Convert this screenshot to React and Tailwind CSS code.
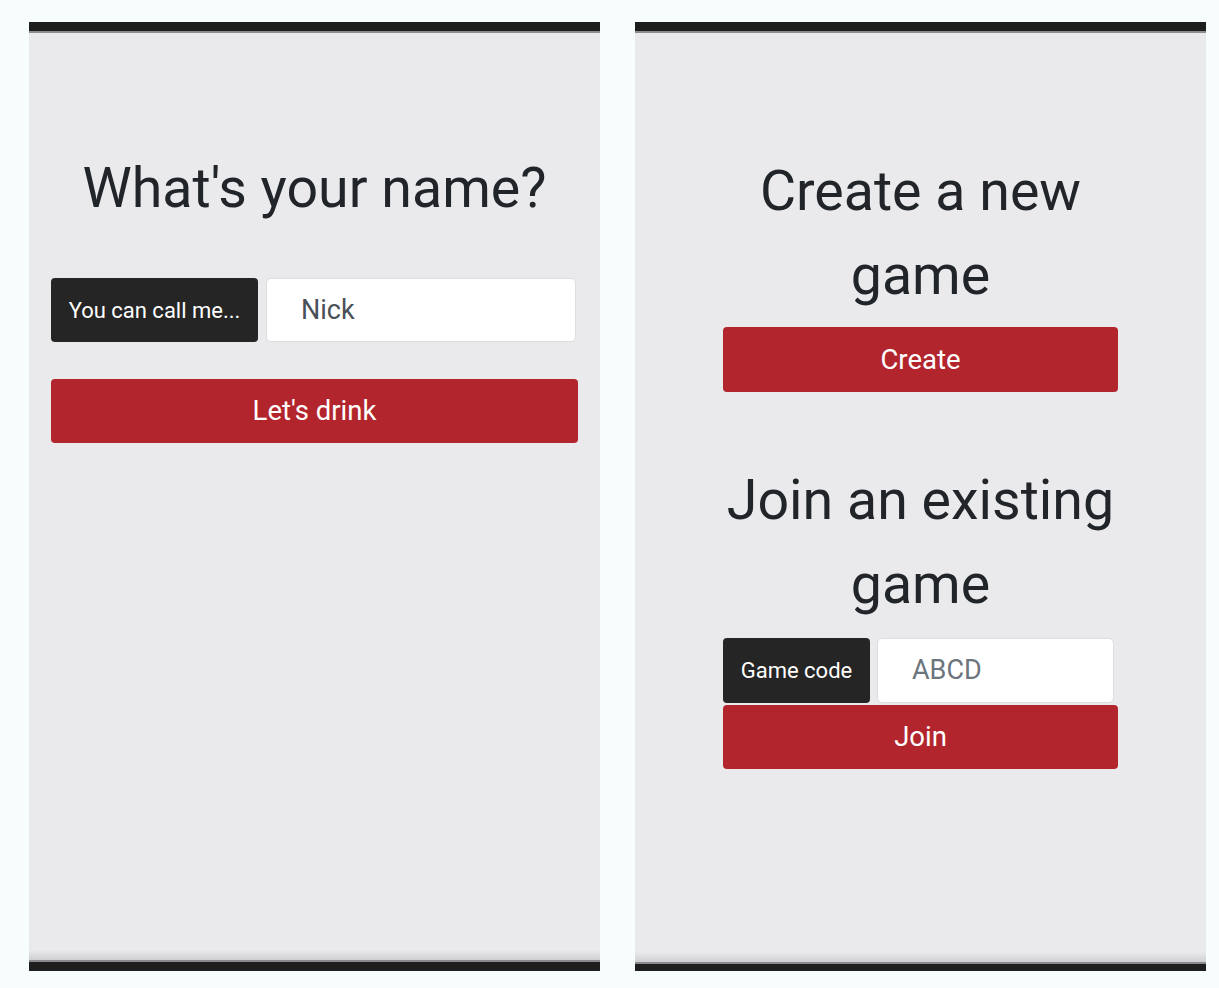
import React from "react";

function Frame({ children, bottomH }) {
  return (
    <div className="flex h-[949px] w-[571px] flex-col">
      <div className="h-[9px] bg-[#1e1e1e]" />
      <div className="h-[2px] bg-[#8d8d90]" />
      <div className="relative flex-1 bg-[#eaeaec]">
        {children}
        <div className="absolute bottom-0 left-0 right-0 h-[10px] bg-gradient-to-b from-[#eaeaec] to-[#cfcfd3]" />
      </div>
      <div className="h-[2px] bg-[#8a8a8e]" />
      <div className={bottomH + " bg-[#1e1e1e]"} />
    </div>
  );
}

export default function App() {
  return (
    <div
      className="min-h-[988px] w-[1219px] bg-[#f7fdfd] pt-[22px] pl-[29px]"
      style={{ fontFamily: "Roboto, 'Liberation Sans', sans-serif" }}
    >
      <div className="flex gap-[35px]">
        <Frame bottomH="h-[9px]">
          <div className="px-[22px] pt-[114px]">
            <h1 className="text-center text-[55.5px] leading-[84px] font-normal text-[#212529]">
              What's your name?
            </h1>
            <div className="mt-[47px] flex h-[64px] gap-[8px]">
              <div className="flex w-[207px] items-center justify-center rounded-[4px] bg-[#252525] text-[22px] text-white">
                You can call me...
              </div>
              <div className="flex w-[310px] items-center rounded-[5px] border border-[#dcdde0] bg-white pl-[34px] text-[27px] text-[#495057]">
                Nick
              </div>
            </div>
            <button className="mt-[37px] flex h-[64px] w-full items-center justify-center rounded-[4px] bg-[#b3252d] text-[27.5px] text-white">
              Let's drink
            </button>
          </div>
        </Frame>
        <Frame bottomH="h-[7px]">
          <div className="mx-auto w-[395px] pt-[117px]">
            <h1 className="text-center text-[55.5px] leading-[84px] font-normal text-[#212529]">
              Create a new game
            </h1>
            <button className="mt-[9px] flex h-[65px] w-full items-center justify-center rounded-[4px] bg-[#b3252d] text-[27.5px] text-white">
              Create
            </button>
            <h1 className="mt-[67px] text-center text-[55.5px] leading-[84px] font-normal text-[#212529]">
              Join an existing game
            </h1>
            <div className="mt-[11px] flex h-[65px] gap-[7px]">
              <div className="flex w-[147px] items-center justify-center rounded-[4px] bg-[#252525] text-[22px] text-white">
                Game code
              </div>
              <div className="flex w-[237px] items-center rounded-[5px] border border-[#dcdde0] bg-white pl-[34px] text-[27px] text-[#6c757d]">
                ABCD
              </div>
            </div>
            <button className="mt-[2px] flex h-[64px] w-full items-center justify-center rounded-[4px] bg-[#b3252d] text-[27.5px] text-white">
              Join
            </button>
          </div>
        </Frame>
      </div>
    </div>
  );
}
